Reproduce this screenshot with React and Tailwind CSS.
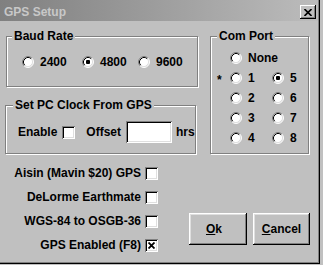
import React from "react";

const Radio = ({ checked }) => (
  <svg width="12" height="12" viewBox="0 0 12 12" className="shrink-0">
    <circle cx="6" cy="6" r="5" fill="#fff" />
    <path d="M2.11 9.89 A5.5 5.5 0 0 1 9.89 2.11" stroke="#808080" fill="none" />
    <path d="M9.89 2.11 A5.5 5.5 0 0 1 2.11 9.89" stroke="#fff" fill="none" />
    <path d="M2.82 9.18 A4.5 4.5 0 0 1 9.18 2.82" stroke="#000" fill="none" />
    <path d="M9.18 2.82 A4.5 4.5 0 0 1 2.82 9.18" stroke="#dfdfdf" fill="none" />
    {checked && <rect x="4" y="4" width="4" height="4" rx="1" fill="#000" />}
  </svg>
);

const Check = ({ checked }) => (
  <div className="flex h-[13px] w-[13px] shrink-0 items-center justify-center bg-white shadow-[inset_1px_1px_0_#808080,inset_-1px_-1px_0_#fff,inset_2px_2px_0_#000,inset_-2px_-2px_0_#dfdfdf]">
    {checked && (
      <svg width="7" height="7" viewBox="0 0 7 7">
        <path d="M0.5 0.5 L6.5 6.5 M6.5 0.5 L0.5 6.5" stroke="#000" strokeWidth="1.8" />
      </svg>
    )}
  </div>
);

const Opt = ({ checked, label, w }) => (
  <div className={`flex items-center gap-[6px] ${w}`}>
    <Radio checked={checked} />
    <span>{label}</span>
  </div>
);

const Group = ({ title, cls, legendCls, children }) => (
  <fieldset
    className={`border border-[#808080] shadow-[inset_1px_1px_0_#fff,1px_1px_0_#fff] ${cls}`}
  >
    <legend className={`bg-[#c0c0c0] px-[2px] leading-[14px] ${legendCls}`}>{title}</legend>
    {children}
  </fieldset>
);

const Button = ({ children, w }) => (
  <button
    className={`flex h-[32px] ${w} items-center justify-center bg-[#c0c0c0] leading-[14px] shadow-[inset_-1px_-1px_0_#000,inset_1px_1px_0_#fff,inset_-2px_-2px_0_#808080,inset_2px_2px_0_#dfdfdf]`}
  >
    {children}
  </button>
);

export default function App() {
  return (
    <div
      className="h-[265px] w-[323px] overflow-hidden bg-[#c0c0c0] text-[12px] font-bold leading-[14px] text-black"
      style={{ fontFamily: '"Liberation Sans", Arial, sans-serif' }}
    >
      <div className="h-[264px] w-[320px] shadow-[inset_-1px_-1px_0_#000,inset_-2px_-2px_0_#808080]">
        {/* title bar */}
        <div className="flex h-[21px] w-[318px] items-center justify-between bg-gradient-to-r from-[#808080] to-[#bcbcbc] pl-[4px] pr-[2px] pt-[3px]">
          <span className="text-[#c8c8c8]">GPS Setup</span>
          <div className="flex h-[14px] w-[16px] items-center justify-center bg-[#c0c0c0] shadow-[inset_-1px_-1px_0_#000,inset_1px_1px_0_#fff,inset_-2px_-2px_0_#808080]">
            <svg width="8" height="7" viewBox="0 0 8 7">
              <path d="M0.5 0 L7.5 7 M7.5 0 L0.5 7" stroke="#000" strokeWidth="1.6" />
            </svg>
          </div>
        </div>

        {/* top section */}
        <div className="flex pl-[5px] pt-[8px]">
          <div className="flex w-[193px] flex-col">
            <Group title="Baud Rate" cls="ml-[1px] h-[58px] w-[192px]" legendCls="ml-[5px]">
              <div className="flex h-[14px] items-center pl-[15px] pt-[0px] mt-[12px]">
                <Opt checked={false} label="2400" w="w-[60px]" />
                <Opt checked={true} label="4800" w="w-[56px]" />
                <Opt checked={false} label="9600" w="" />
              </div>
            </Group>
            <Group title="Set PC Clock From GPS" cls="mt-[11px] h-[56px] w-[191px]" legendCls="ml-[7px]">
              <div className="flex h-[22px] items-center pl-[12px] mt-[9px]">
                <span>Enable</span>
                <div className="ml-[5px]">
                  <Check checked={false} />
                </div>
                <span className="ml-[11px]">Offset</span>
                <div className="ml-[5px] h-[22px] w-[46px] bg-white shadow-[inset_1px_1px_0_#808080,inset_-1px_-1px_0_#fff,inset_2px_2px_0_#000,inset_-2px_-2px_0_#dfdfdf]" />
                <span className="ml-[4px]">hrs</span>
              </div>
            </Group>
          </div>
          <Group title="Com Port" cls="ml-[12px] h-[125px] w-[99px]" legendCls="ml-[6px]">
            <div className="flex flex-col pl-[6px] pt-[5px]">
              <div className="flex h-[20px] items-center">
                <span className="w-[13px]" />
                <Opt checked={false} label="None" w="" />
              </div>
              {[
                ["1", "5", false, true, true],
                ["2", "6", false, false, false],
                ["3", "7", false, false, false],
                ["4", "8", false, false, false],
              ].map(([a, b, ca, cb, star]) => (
                <div key={a} className="flex h-[20px] items-center">
                  <span className="w-[13px] pt-[3px]">{star ? "*" : ""}</span>
                  <Opt checked={ca} label={a} w="w-[42px]" />
                  <Opt checked={cb} label={b} w="" />
                </div>
              ))}
            </div>
          </Group>
        </div>

        {/* bottom section */}
        <div className="flex pl-[5px]">
          <div className="flex w-[153px] flex-col items-end pt-[7px]">
            {[
              ["Aisin (Mavin $20) GPS", false],
              ["DeLorme Earthmate", false],
              ["WGS-84 to OSGB-36", false],
              ["GPS Enabled (F8)", true],
            ].map(([t, c]) => (
              <div key={t} className="flex h-[24px] items-center gap-[4px]">
                <span>{t}</span>
                <Check checked={c} />
              </div>
            ))}
          </div>
          <div className="ml-[31px] mt-[59px] flex gap-[6px]">
            <Button w="w-[58px]">
              <span className="pr-[8px]">
                <span className="underline">O</span>k
              </span>
            </Button>
            <Button w="w-[57px]">
              <span>
                <span className="underline">C</span>ancel
              </span>
            </Button>
          </div>
        </div>
      </div>
    </div>
  );
}
